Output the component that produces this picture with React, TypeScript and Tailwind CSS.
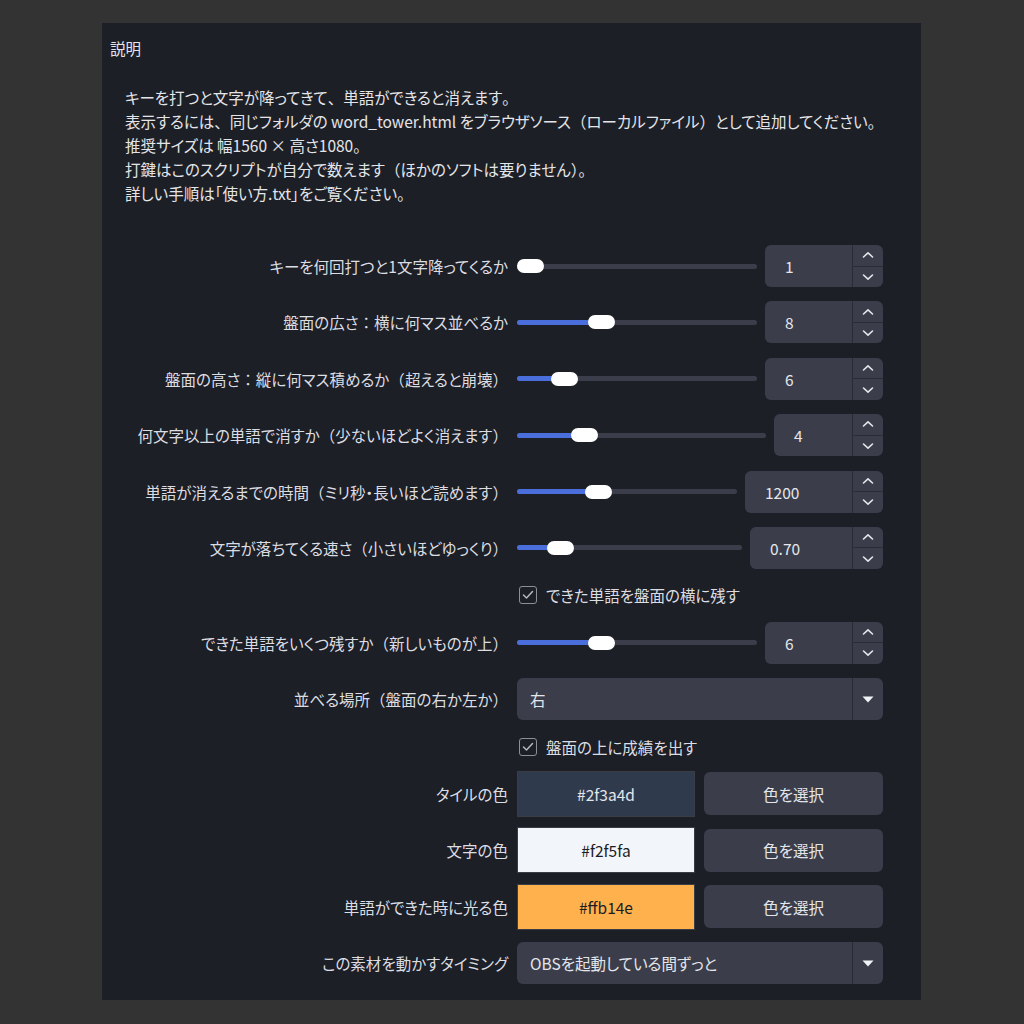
import React from "react";

type SliderRow = { label: string; value: string; pos: number; boxW: number };

const sliders1: SliderRow[] = [
  { label: "キーを何回打つと1文字降ってくるか", value: "1", pos: 0, boxW: 118 },
  { label: "盤面の広さ：横に何マス並べるか", value: "8", pos: 33.5, boxW: 118 },
  { label: "盤面の高さ：縦に何マス積めるか（超えると崩壊）", value: "6", pos: 16, boxW: 118 },
  { label: "何文字以上の単語で消すか（少ないほどよく消えます）", value: "4", pos: 24.5, boxW: 109 },
  { label: "単語が消えるまでの時間（ミリ秒・長いほど読めます）", value: "1200", pos: 35, boxW: 138 },
  { label: "文字が落ちてくる速さ（小さいほどゆっくり）", value: "0.70", pos: 15, boxW: 133 },
];

// kana set proportionally, but brackets / colon / comma keep full width
const T = ({ s }: { s: string }) => (
  <>
    {s.split(/([（）：、。])/).map((part, i) =>
      /^[（）：、。]$/.test(part) ? (
        <span key={i} className="[font-feature-settings:normal]">
          {part}
        </span>
      ) : (
        part
      )
    )}
  </>
);

const Chevron = ({ up }: { up?: boolean }) => (
  <svg width="12" height="8" viewBox="0 0 12 8" fill="none">
    <polyline
      points={up ? "1.5,6 6,1.8 10.5,6" : "1.5,2 6,6.2 10.5,2"}
      stroke="#e4e6ec"
      strokeWidth="1.6"
      strokeLinecap="round"
      strokeLinejoin="round"
    />
  </svg>
);

const Label = ({ text }: { text: string }) => (
  <div className="flex items-center justify-end text-right text-[#dcdde2] whitespace-nowrap">
    <span>
      <T s={text} />
    </span>
  </div>
);

const Slider = ({ row }: { row: SliderRow }) => {
  // handle is 27px wide, travels over track minus its own width
  const left = `calc((100% - 27px) * ${row.pos / 100})`;
  return (
    <div className="flex items-center gap-2 h-[42px]">
      <div className="relative flex-1 h-[14px] flex items-center">
        <div className="w-full h-[5px] rounded-full bg-[#3b3e4a]" />
        <div
          className="absolute top-[4.5px] left-0 h-[5px] rounded-full bg-[#4a6edb]"
          style={{ width: `calc(${left} + 13px)` }}
        />
        <div className="absolute top-0 w-[27px] h-[14px] rounded-[7px] bg-white" style={{ left }} />
      </div>
      <div className="flex h-[42px] rounded-[6px] bg-[#3b3e4a] overflow-hidden" style={{ width: row.boxW }}>
        <div className="flex-1 flex items-center pl-[20px] text-[#e4e6ec]">{row.value}</div>
        <div className="w-[31px] flex flex-col border-l border-[#2a2c35]">
          <div className="flex-1 flex items-center justify-center border-b border-[#2a2c35]">
            <Chevron up />
          </div>
          <div className="flex-1 flex items-center justify-center">
            <Chevron />
          </div>
        </div>
      </div>
    </div>
  );
};

const Check = ({ text }: { text: string }) => (
  <div className="flex items-center h-[24px] pl-[2px] gap-[9px] text-[#dcdde2]">
    <div className="w-[18px] h-[18px] rounded-[3px] border-[1.5px] border-[#8d8f98] flex items-center justify-center">
      <svg width="12" height="10" viewBox="0 0 12 10" fill="none">
        <polyline points="1.5,5 4.5,8 10.5,1.5" stroke="#b5b7bf" strokeWidth="1.5" strokeLinecap="round" strokeLinejoin="round" />
      </svg>
    </div>
    <span>{text}</span>
  </div>
);

const Select = ({ value }: { value: string }) => (
  <div className="flex h-[42px] rounded-[6px] bg-[#3b3e4a] overflow-hidden">
    <div className="flex-1 flex items-center pl-[13px] text-[#e4e6ec]">{value}</div>
    <div className="w-[31px] flex items-center justify-center border-l border-[#2a2c35]">
      <svg width="12" height="7" viewBox="0 0 12 7">
        <polygon points="0.5,0.5 11.5,0.5 6,6.5" fill="#f2f3f6" />
      </svg>
    </div>
  </div>
);

const ColorRow = ({ hex, dark }: { hex: string; dark?: boolean }) => (
  <div className="flex items-center gap-[9px] h-[42px]">
    <div
      className={`w-[178px] h-[46px] flex items-center justify-center border border-[#3a3c46] ${dark ? "text-[#1c1d22]" : "text-[#e4e6ec]"}`}
      style={{ backgroundColor: hex }}
    >
      {hex}
    </div>
    <div className="flex-1 h-[43px] rounded-[6px] bg-[#3b3e4a] flex items-center justify-center text-[#e4e6ec]">
      色を選択
    </div>
  </div>
);

export default function App() {
  return (
    <div
      className="w-full h-[1024px] bg-[#333333] pt-[23px] pl-[102px] text-[15.5px] leading-[24px] [font-feature-settings:'palt']"
      style={{ fontFamily: '"Noto Sans CJK JP", "Noto Sans", sans-serif' }}
    >
      <div className="w-[819px] h-[977px] bg-[#1d1f26] pt-[13px]">
        <div className="pl-[8px] text-[#e4e5e9]">説明</div>
        <div className="pl-[23px] mt-[25px] text-[#e4e5e9]">
          <p><T s="キーを打つと文字が降ってきて、単語ができると消えます。" /></p>
          <p><T s="表示するには、同じフォルダの word_tower.html をブラウザソース（ローカルファイル）として追加してください。" /></p>
          <p><T s="推奨サイズは 幅1560 × 高さ1080。" /></p>
          <p><T s="打鍵はこのスクリプトが自分で数えます（ほかのソフトは要りません）。" /></p>
          <p><T s="詳しい手順は「使い方.txt」をご覧ください。" /></p>
        </div>

        <div className="mt-[40px] grid grid-cols-[406px_366px] gap-x-[9px] gap-y-[14.4px]">
          {sliders1.map((r) => (
            <React.Fragment key={r.label}>
              <Label text={r.label} />
              <Slider row={r} />
            </React.Fragment>
          ))}

          <div />
          <Check text="できた単語を盤面の横に残す" />

          <Label text="できた単語をいくつ残すか（新しいものが上）" />
          <Slider row={{ label: "", value: "6", pos: 33.5, boxW: 118 }} />

          <Label text="並べる場所（盤面の右か左か）" />
          <Select value="右" />

          <div />
          <Check text="盤面の上に成績を出す" />

          <Label text="タイルの色" />
          <ColorRow hex="#2f3a4d" />

          <Label text="文字の色" />
          <ColorRow hex="#f2f5fa" dark />

          <Label text="単語ができた時に光る色" />
          <ColorRow hex="#ffb14e" dark />

          <Label text="この素材を動かすタイミング" />
          <Select value="OBSを起動している間ずっと" />
        </div>
      </div>
    </div>
  );
}
